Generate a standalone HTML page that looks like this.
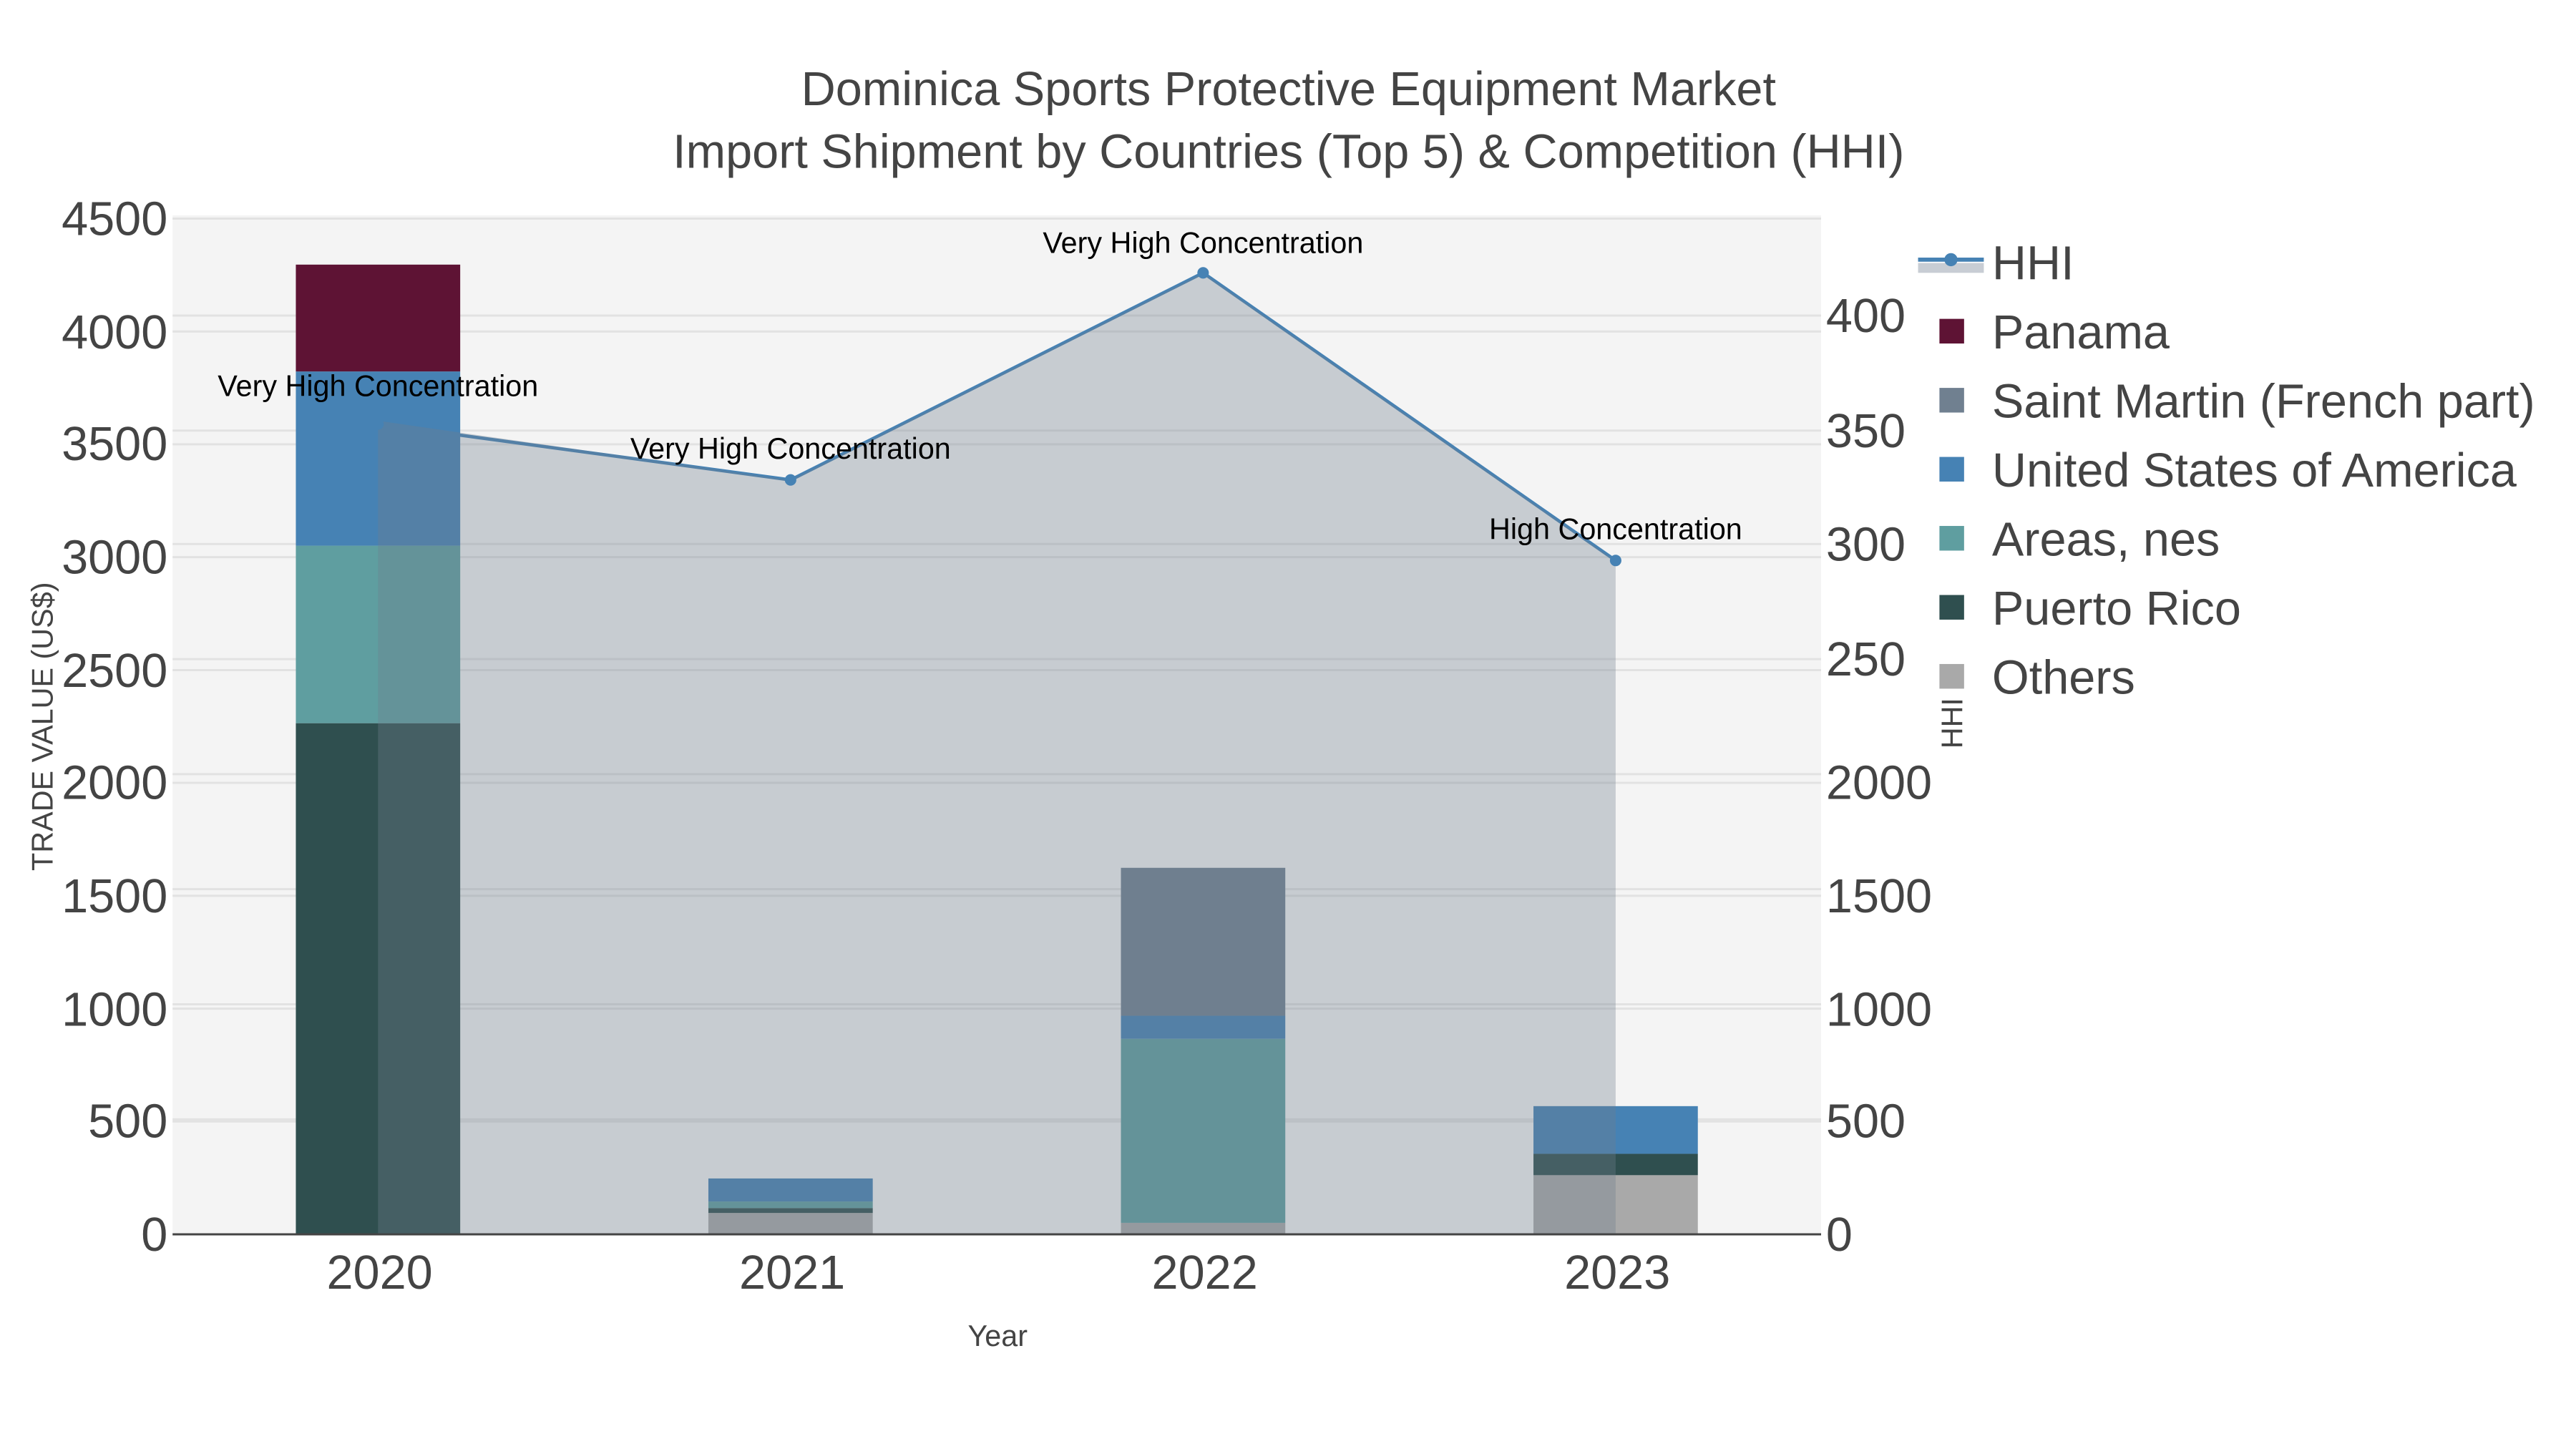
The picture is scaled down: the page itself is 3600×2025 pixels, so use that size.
<!DOCTYPE html>
<html><head><meta charset="utf-8"><style>html,body{margin:0;padding:0;background:#fff}svg{display:block}</style></head>
<body>
<svg width="3600" height="2025" viewBox="0 0 1567.3 881.6" preserveAspectRatio="none" xmlns="http://www.w3.org/2000/svg" font-family="Liberation Sans, sans-serif">
<rect width="1567.3" height="881.6" fill="#fff"/>
<rect x="105" y="131" width="1003" height="620" fill="#f4f4f4"/>
<g stroke="#e2e2e2" stroke-width="1.3">
<line x1="105" x2="1108" y1="682.3" y2="682.3"/><line x1="105" x2="1108" y1="613.7" y2="613.7"/><line x1="105" x2="1108" y1="545" y2="545"/><line x1="105" x2="1108" y1="476.3" y2="476.3"/><line x1="105" x2="1108" y1="407.7" y2="407.7"/><line x1="105" x2="1108" y1="339" y2="339"/><line x1="105" x2="1108" y1="270.3" y2="270.3"/><line x1="105" x2="1108" y1="201.7" y2="201.7"/><line x1="105" x2="1108" y1="133" y2="133"/>
<line x1="105" x2="1108" y1="681" y2="681"/><line x1="105" x2="1108" y1="611" y2="611"/><line x1="105" x2="1108" y1="541" y2="541"/><line x1="105" x2="1108" y1="471" y2="471"/><line x1="105" x2="1108" y1="401" y2="401"/><line x1="105" x2="1108" y1="331" y2="331"/><line x1="105" x2="1108" y1="262" y2="262"/><line x1="105" x2="1108" y1="192" y2="192"/>
</g>
<polyline points="230,258 481,292 732,166 983,341" fill="none" stroke="#4682b4" stroke-width="2"/>
<rect x="180" y="440" width="100" height="311" fill="#2f4f4f"/>
<rect x="180" y="332" width="100" height="108" fill="#5f9ea0"/>
<rect x="180" y="226" width="100" height="106" fill="#4682b4"/>
<rect x="180" y="161" width="100" height="65" fill="#5e1334"/>
<rect x="431" y="738" width="100" height="13" fill="#a9a9a9"/>
<rect x="431" y="735" width="100" height="3" fill="#2f4f4f"/>
<rect x="431" y="731" width="100" height="4" fill="#5f9ea0"/>
<rect x="431" y="717" width="100" height="14" fill="#4682b4"/>
<rect x="682" y="744" width="100" height="7" fill="#a9a9a9"/>
<rect x="682" y="632" width="100" height="112" fill="#5f9ea0"/>
<rect x="682" y="618" width="100" height="14" fill="#4682b4"/>
<rect x="682" y="528" width="100" height="90" fill="#708090"/>
<rect x="933" y="715" width="100" height="36" fill="#a9a9a9"/>
<rect x="933" y="702" width="100" height="13" fill="#2f4f4f"/>
<rect x="933" y="673" width="100" height="29" fill="#4682b4"/>
<polygon points="230,751 230,256 481,292 732,166 983,341 983,751" fill="rgb(112,126,142)" fill-opacity="0.34"/>
<g fill="#4682b4"><circle cx="230" cy="258" r="3.5"/><circle cx="481" cy="292" r="3.5"/><circle cx="732" cy="166" r="3.5"/><circle cx="983" cy="341" r="3.5"/></g>
<line x1="105" x2="1108" y1="751" y2="751" stroke="#444" stroke-width="1.3"/>
<g font-size="18" fill="#000" text-anchor="middle">
<text x="230" y="241">Very High Concentration</text><text x="481" y="279">Very High Concentration</text><text x="732" y="154">Very High Concentration</text><text x="983" y="328">High Concentration</text>
</g>
<g font-size="29" fill="#444" text-anchor="end">
<text x="102" y="761">0</text><text x="102" y="692">500</text><text x="102" y="624">1000</text><text x="102" y="555">1500</text><text x="102" y="486">2000</text><text x="102" y="418">2500</text><text x="102" y="349">3000</text><text x="102" y="280">3500</text><text x="102" y="212">4000</text><text x="102" y="143">4500</text>
</g>
<g font-size="29" fill="#444">
<text x="1111" y="761">0</text><text x="1111" y="692">500</text><text x="1111" y="624">1000</text><text x="1111" y="555">1500</text><text x="1111" y="486">2000</text><text x="1111" y="411">250</text><text x="1111" y="341">300</text><text x="1111" y="272">350</text><text x="1111" y="202">400</text>
</g>
<g font-size="29" fill="#444" text-anchor="middle">
<text x="231" y="784">2020</text><text x="482" y="784">2021</text><text x="733" y="784">2022</text><text x="984" y="784">2023</text>
<text x="784" y="64">Dominica Sports Protective Equipment Market</text>
<text x="784" y="102">Import Shipment by Countries (Top 5) &amp; Competition (HHI)</text>
</g>
<text x="607" y="819" font-size="18" fill="#444" text-anchor="middle">Year</text>
<text transform="translate(32,442) rotate(-90)" font-size="18" fill="#444" text-anchor="middle">TRADE VALUE (US$)</text>
<text transform="translate(1194,440) rotate(-90)" font-size="18" fill="#444" text-anchor="middle">HHI</text>
<rect x="1167" y="160" width="40" height="6" fill="#c8cdd4"/>
<line x1="1167" x2="1207" y1="158" y2="158" stroke="#4682b4" stroke-width="2.5"/>
<circle cx="1187" cy="158" r="4" fill="#4682b4"/>
<g font-size="29" fill="#444">
<text x="1212" y="170">HHI</text><text x="1212" y="212">Panama</text><text x="1212" y="254">Saint Martin (French part)</text><text x="1212" y="296">United States of America</text><text x="1212" y="338">Areas, nes</text><text x="1212" y="380">Puerto Rico</text><text x="1212" y="422">Others</text>
</g>
<rect x="1180" y="194" width="15" height="15" fill="#5e1334"/>
<rect x="1180" y="236" width="15" height="15" fill="#708090"/>
<rect x="1180" y="278" width="15" height="15" fill="#4682b4"/>
<rect x="1180" y="320" width="15" height="15" fill="#5f9ea0"/>
<rect x="1180" y="362" width="15" height="15" fill="#2f4f4f"/>
<rect x="1180" y="404" width="15" height="15" fill="#a9a9a9"/>
</svg>
</body></html>
